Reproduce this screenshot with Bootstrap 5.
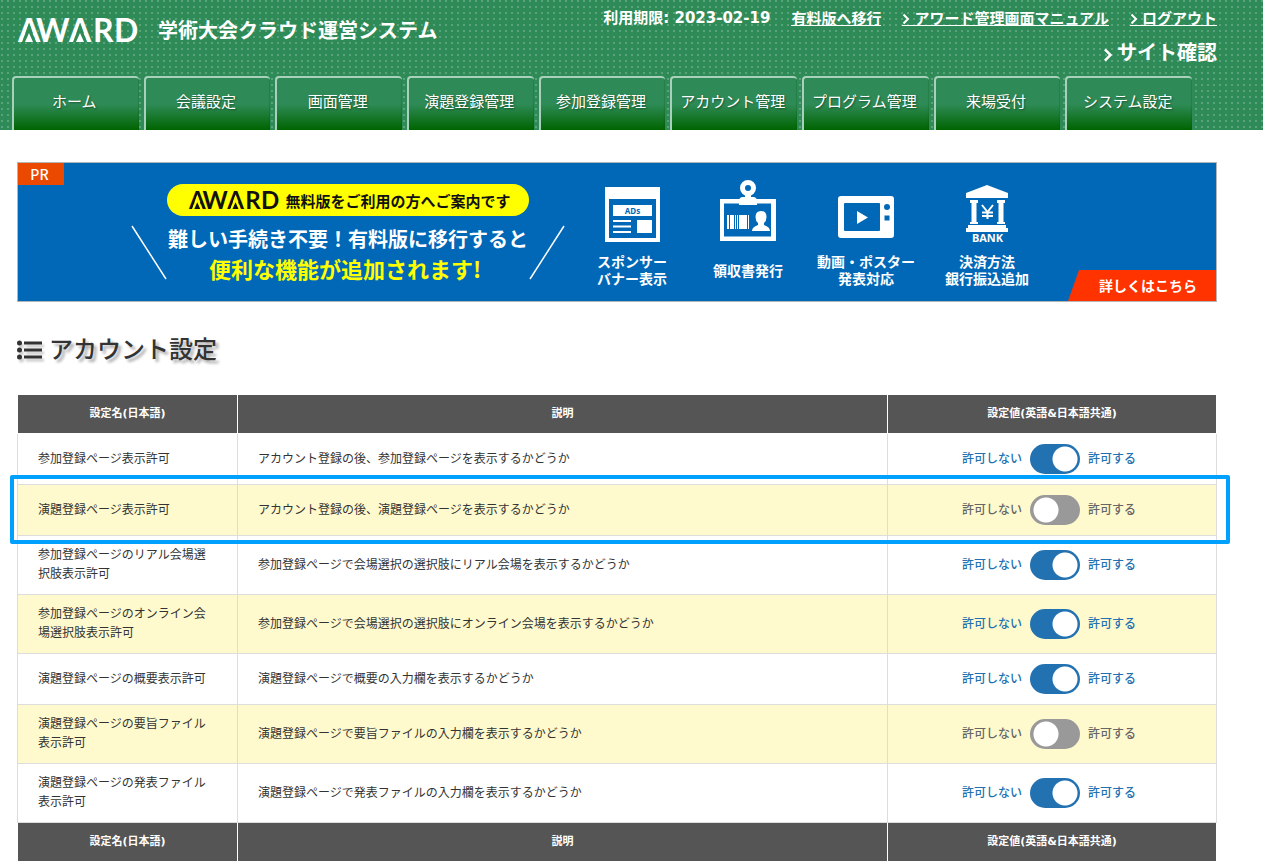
<!DOCTYPE html>
<html lang="ja">
<head>
<meta charset="utf-8">
<meta name="viewport" content="width=device-width, initial-scale=1">
<title>アカウント設定 | AWARD 学術大会クラウド運営システム</title>
<link href="https://cdn.jsdelivr.net/npm/bootstrap@5.3.0/dist/css/bootstrap.min.css" rel="stylesheet">
<style>
  body { font-family: "Noto Sans CJK JP", sans-serif; font-size: 12px; line-height: 19px; color: #333; background: #fff; }
  svg { overflow: visible; }

  /* header */
  .site-head { --logo-cut: #2e8b57; color: #fff; background-color: #2e8b57;
    background-image: conic-gradient(from 90deg at 4px 4px, #5aa27a 90deg, transparent 0); background-size: 6px 6px; background-position: -3px -4px; }
  .head-top { padding: 4px 46px 0 18px; height: 76px; }
  .brand-row { padding-top: 12px; gap: 20px; }
  .site-title { font-size: 20px; line-height: 28px; font-weight: 700; }
  .util-links { font-size: 15px; height: 28px; font-weight: 700; gap: 21px; }
  .util-links a { color: #fff; text-decoration: none; line-height: 15px; border-bottom: 1px solid #fff; }
  .site-link { color: #fff; font-size: 20px; line-height: 40px; font-weight: 700; }
  .limit-date, .set-table th { font-family: "DejaVu Sans", "Noto Sans CJK JP", sans-serif; }
  .main-nav { padding: 0 71px 0 12px; gap: 5px; }
  .main-nav a { flex: 1 1 0; height: 54px; padding-right: 4px; line-height: 46px; font-size: 15px; color: #fff; text-align: center; text-decoration: none; white-space: nowrap;
    border-top: 2px solid #a9d0ba; border-left: 2px solid #a9d0ba; border-radius: 4px 4px 0 0;
    background: linear-gradient(#2e8b57 50%, #006400); text-shadow: 1px 1px 2px #00000066; box-shadow: inset -1px 0 1px #00500033; }

  .page-body { padding: 32px 46px 0 17px; }

  /* promotion banner */
  .promo { --logo-cut: #ff0; height: 140px; border: 1px solid #b5b5b5; background: #0068b7; color: #fff; font-weight: 700; text-decoration: none; position: relative; padding-left: 113px; }
  .promo:hover { color: #fff; }
  .pr-tag { position: absolute; left: 0; top: 0; width: 46px; height: 22px; padding-right: 3px; line-height: 22px; font-size: 14px; font-weight: 500; text-align: center; background: #eb4800; }
  .pill { width: 362px; height: 32px; padding-left: 4px; background: #ff0; color: #111; font-size: 15px; gap: 6px; }
  .copy-block { width: 434px; padding-top: 21px; }
  .copy-main { font-size: 20px; line-height: 30px; white-space: nowrap; }
  .copy-sub { padding-right: 6px; font-size: 22px; line-height: 29px; color: #ff0; white-space: nowrap; }
  .features { display: grid; grid-template-columns: 116px 116px 120px 122px; align-content: start; padding: 17px 0 0 9px; font-size: 14px; line-height: 17px; text-align: center; white-space: nowrap; }
  .feature-label { height: 34px; margin-top: 9px; }
  .more-tag { position: absolute; right: 0; bottom: 0; width: 148px; height: 31px; padding-left: 12px; line-height: 31px; font-size: 14px; text-align: center; background: #f30; clip-path: polygon(11px 0, 100% 0, 100% 100%, 0 100%); }

  .page-title { font-size: 24px; line-height: 36px; font-weight: 500; margin: 28px 0 25px; gap: 7px; color: #333; text-shadow: 3px 3px 3px #00000055; }
  .page-title span { padding-bottom: 4px; }
  .page-title svg { filter: drop-shadow(2px 3px 1px #00000033); }

  /* settings table */
  .set-table { width: 100%; border-collapse: separate; border-spacing: 0; table-layout: fixed; }
  .set-table th { background: #555; color: #fff; font-size: 11px; font-weight: 700; line-height: 18px; padding: 10px; text-align: center; border-right: 1px solid #fff; }
  .set-table thead th { border-bottom: 1px solid #fff; }
  .set-table tr > :first-child { border-left: 1px solid #fff; }
  .set-table td { padding: 8px 20px 12px; vertical-align: middle; border-right: 1px solid #ddd; border-bottom: 1px solid #ddd; }
  .set-table tbody tr > :first-child { border-left: 1px solid #ddd; }
  .set-table td.set-value { padding: 10px 16px 10px 10px; }
  .set-table tbody tr:nth-child(even) td { background: #fffacd; }
  .col-name { width: 221px; }
  .col-value { width: 329px; }
  .marked-row { position: relative; }
  .row-marker { position: absolute; inset: -10px -13px -8px -7px; border: 4px solid #00a0ff; border-radius: 2px; pointer-events: none; }

  .toggle { gap: 8px; color: #666; font-weight: 500; }
  .toggle span { padding-bottom: 4px; }
  .toggle-on { color: #2271b1; }
  .toggle input { appearance: none; margin: 0; width: 50px; height: 30px; border-radius: 15px; background: #999 radial-gradient(circle at 16px 15px, #fff 12px, transparent 13px); }
  .toggle input:checked { background: #2271b1 radial-gradient(circle at 35px 15px, #fff 12px, transparent 13px); }
</style>
</head>
<body>

<svg width="0" height="0" class="position-absolute" aria-hidden="true">
  <symbol id="logo" viewBox="0 0 120 24" overflow="visible">
    <g fill="currentColor" font-family="Lato, sans-serif" font-size="32" font-weight="700">
      <text x="0 51" y="24">AA</text>
    </g>
    <path d="M11 5 L4 24.500 H18 Z M62 5 L55 24.500 H69 Z" style="fill:var(--logo-cut)"/>
    <path d="M11 15 L7 24 H15 Z M62 15 L58 24 H66 Z" fill="currentColor"/>
    <g fill="currentColor" font-family="Lato, sans-serif" font-size="32" font-weight="700">
      <text x="18" y="24">W</text>
      <text x="75 96" y="24">RD</text>
    </g>
  </symbol>
  <symbol id="chev" viewBox="0 0 8 12">
    <path d="M1.500 1.500 L6 6 L1.500 10.500" fill="none" stroke="currentColor" stroke-width="2"/>
  </symbol>
</svg>

<header class="site-head">
  <div class="head-top d-flex justify-content-between align-items-start">
    <div class="brand-row d-flex align-items-center">
      <svg width="120" height="24" role="img" aria-label="AWARD"><use href="#logo"/></svg>
      <div class="site-title">学術大会クラウド運営システム</div>
    </div>
    <div class="text-end">
      <div class="util-links d-flex align-items-center">
        <span class="limit-date">利用期限: 2023-02-19</span>
        <a href="#">有料版へ移行</a>
        <a href="#"><svg width="8" height="12" class="me-1"><use href="#chev"/></svg>アワード管理画面マニュアル</a>
        <a href="#"><svg width="8" height="12" class="me-1"><use href="#chev"/></svg>ログアウト</a>
      </div>
      <a href="#" class="site-link text-decoration-none"><svg width="10" height="16" class="me-1"><use href="#chev"/></svg>サイト確認</a>
    </div>
  </div>
  <nav class="main-nav d-flex">
    <a href="#">ホーム</a>
    <a href="#">会議設定</a>
    <a href="#">画面管理</a>
    <a href="#">演題登録管理</a>
    <a href="#">参加登録管理</a>
    <a href="#">アカウント管理</a>
    <a href="#">プログラム管理</a>
    <a href="#">来場受付</a>
    <a href="#">システム設定</a>
  </nav>
</header>

<main class="page-body">
  <a href="#" class="promo d-flex">
    <span class="pr-tag">PR</span>
    <div class="copy-block d-flex flex-column align-items-center">
      <div class="pill rounded-pill d-flex align-items-center justify-content-center">
        <svg width="90" height="18" role="img" aria-label="AWARD"><use href="#logo"/></svg>
        <span>無料版をご利用の方へご案内です</span>
      </div>
      <div class="d-flex justify-content-between w-100 mt-2">
        <svg width="36" height="55" class="flex-shrink-0"><path d="M1 2 L35 55" stroke="#fff" stroke-width="1.500"/></svg>
        <div class="text-center">
          <div class="copy-main">難しい手続き不要！有料版に移行すると</div>
          <div class="copy-sub">便利な機能が追加されます!</div>
        </div>
        <svg width="36" height="55" class="flex-shrink-0"><path d="M35 2 L1 55" stroke="#fff" stroke-width="1.500"/></svg>
      </div>
    </div>
    <div class="features">
      <div>
        <svg width="58" height="64" viewBox="0 0 58 64">
          <path fill="#fff" fill-rule="evenodd" d="M2 7H57V62H2Z M6 19V58H53V19Z"/>
          <path fill="#fff" d="M10 25H49V36H10Z M34 40H49V53H34Z M10 40H28V42H10Z M10 45.500H28V47.500H10Z M10 51H28V53H10Z"/>
          <text x="29.500" y="33.500" text-anchor="middle" font-family="Noto Sans, sans-serif" font-size="8" font-weight="700" fill="#0068b7">ADs</text>
        </svg>
        <div class="feature-label d-flex align-items-center justify-content-center">スポンサー<br>バナー表示</div>
      </div>
      <div>
        <svg width="58" height="64" viewBox="0 0 58 64">
          <path fill="#fff" fill-rule="evenodd" d="M1 19H57V61H1Z M5 23.500V56.500H52V23.500Z"/>
          <circle cx="29" cy="8" r="5.500" fill="none" stroke="#fff" stroke-width="5"/>
          <path fill="#fff" d="M26 12H32V17H34Q38 17 38 21V25H20V21Q20 17 24 17H26Z"/>
          <path fill="#fff" d="M8 35H10V49H8Z M11 35H15V49H11Z M16 35H17V49H16Z M18 35H19V49H18Z M20 35H28V49H20Z M29 35H30V49H29Z"/>
          <path fill="#fff" d="M42 31Q47.500 31 47.500 37Q47.500 41 45 43V45Q51 47 51 51H33Q33 47 39 45V43Q36.500 41 36.500 37Q36.500 31 42 31Z"/>
        </svg>
        <div class="feature-label d-flex align-items-center justify-content-center">領収書発行</div>
      </div>
      <div>
        <svg width="58" height="64" viewBox="0 0 58 64">
          <path fill="#fff" fill-rule="evenodd" d="M4 16H54Q57 16 57 19V55Q57 58 54 58H4Q1 58 1 55V19Q1 16 4 16Z M8 23Q7 23 7 24V50Q7 51 8 51H42Q43 51 43 50V24Q43 23 42 23Z"/>
          <circle cx="50" cy="27" r="3" fill="#0068b7"/>
          <path fill="#0068b7" d="M47.500 35.500H52.500V40.500H47.500Z"/>
          <path fill="#fff" d="M20 31L31 37.500L20 44Z"/>
        </svg>
        <div class="feature-label d-flex align-items-center justify-content-center">動画・ポスター<br>発表対応</div>
      </div>
      <div>
        <svg width="58" height="64" viewBox="0 0 58 64">
          <path fill="#fff" d="M29 5L50 13V18H8V13Z M12 20H20V23H18.500V42H20V44H12V42H13.500V23H12Z M39 20H47V23H45.500V42H47V44H39V42H40.500V23H39Z M10 45H48V48H50V52H8V48H10Z"/>
          <path d="M24 25L29.500 32L35 25M29.500 32V39M24 32.500H35M24 36H35" stroke="#fff" stroke-width="2" fill="none"/>
          <text x="29.500" y="62" text-anchor="middle" font-family="Noto Sans, sans-serif" font-size="11" font-weight="700" fill="#fff">BANK</text>
        </svg>
        <div class="feature-label d-flex align-items-center justify-content-center">決済方法<br>銀行振込追加</div>
      </div>
    </div>
    <span class="more-tag">詳しくはこちら</span>
  </a>

  <h1 class="page-title d-flex align-items-center">
    <svg width="25" height="20" viewBox="0 0 25 20" fill="#333"><circle cx="2.500" cy="3" r="2.500"/><circle cx="2.500" cy="10" r="2.500"/><circle cx="2.500" cy="17" r="2.500"/><path d="M7 1.500H25V4.500H7Z M7 8.500H25V11.500H7Z M7 15.500H25V18.500H7Z"/></svg>
    <span>アカウント設定</span>
  </h1>

  <table class="set-table">
    <colgroup><col class="col-name"><col><col class="col-value"></colgroup>
    <thead>
      <tr><th scope="col">設定名(日本語)</th><th scope="col">説明</th><th scope="col">設定値(英語&amp;日本語共通)</th></tr>
    </thead>
    <tbody>
      <tr>
        <td>参加登録ページ表示許可</td>
        <td>アカウント登録の後、参加登録ページを表示するかどうか</td>
        <td class="set-value"><label class="toggle toggle-on d-flex align-items-center justify-content-center"><span>許可しない</span><input type="checkbox" role="switch" checked><span>許可する</span></label></td>
      </tr>
      <tr class="marked-row">
        <td>演題登録ページ表示許可</td>
        <td>アカウント登録の後、演題登録ページを表示するかどうか</td>
        <td class="set-value"><label class="toggle d-flex align-items-center justify-content-center"><span>許可しない</span><input type="checkbox" role="switch"><span>許可する</span></label><div class="row-marker"></div></td>
      </tr>
      <tr>
        <td>参加登録ページのリアル会場選択肢表示許可</td>
        <td>参加登録ページで会場選択の選択肢にリアル会場を表示するかどうか</td>
        <td class="set-value"><label class="toggle toggle-on d-flex align-items-center justify-content-center"><span>許可しない</span><input type="checkbox" role="switch" checked><span>許可する</span></label></td>
      </tr>
      <tr>
        <td>参加登録ページのオンライン会場選択肢表示許可</td>
        <td>参加登録ページで会場選択の選択肢にオンライン会場を表示するかどうか</td>
        <td class="set-value"><label class="toggle toggle-on d-flex align-items-center justify-content-center"><span>許可しない</span><input type="checkbox" role="switch" checked><span>許可する</span></label></td>
      </tr>
      <tr>
        <td>演題登録ページの概要表示許可</td>
        <td>演題登録ページで概要の入力欄を表示するかどうか</td>
        <td class="set-value"><label class="toggle toggle-on d-flex align-items-center justify-content-center"><span>許可しない</span><input type="checkbox" role="switch" checked><span>許可する</span></label></td>
      </tr>
      <tr>
        <td>演題登録ページの要旨ファイル表示許可</td>
        <td>演題登録ページで要旨ファイルの入力欄を表示するかどうか</td>
        <td class="set-value"><label class="toggle d-flex align-items-center justify-content-center"><span>許可しない</span><input type="checkbox" role="switch"><span>許可する</span></label></td>
      </tr>
      <tr>
        <td>演題登録ページの発表ファイル表示許可</td>
        <td>演題登録ページで発表ファイルの入力欄を表示するかどうか</td>
        <td class="set-value"><label class="toggle toggle-on d-flex align-items-center justify-content-center"><span>許可しない</span><input type="checkbox" role="switch" checked><span>許可する</span></label></td>
      </tr>
    </tbody>
    <tfoot>
      <tr><th scope="col">設定名(日本語)</th><th scope="col">説明</th><th scope="col">設定値(英語&amp;日本語共通)</th></tr>
    </tfoot>
  </table>
</main>

<script src="https://cdn.jsdelivr.net/npm/bootstrap@5.3.0/dist/js/bootstrap.bundle.min.js"></script>
</body>
</html>
